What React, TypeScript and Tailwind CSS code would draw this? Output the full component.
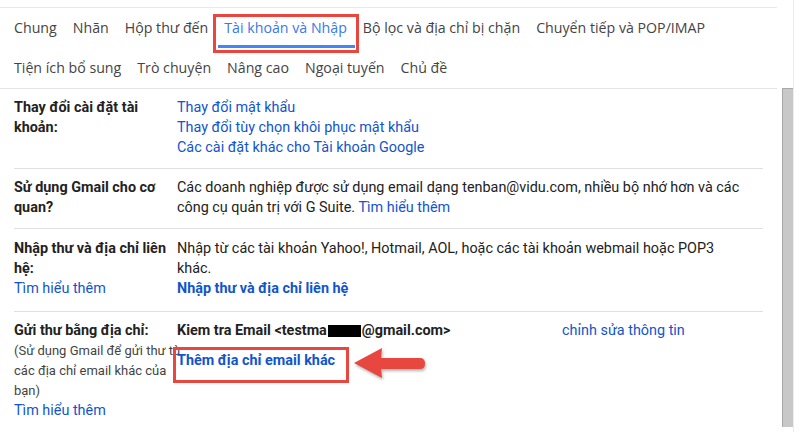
const tabsTop = [
  { label: "Chung" },
  { label: "Nhãn" },
  { label: "Hộp thư đến" },
  { label: "Tài khoản và Nhập", active: true },
  { label: "Bộ lọc và địa chỉ bị chặn" },
  { label: "Chuyển tiếp và POP/IMAP" },
];

const tabsBottom = ["Tiện ích bổ sung", "Trò chuyện", "Nâng cao", "Ngoại tuyến", "Chủ đề"];

function Tab({ label, active }: { label: string; active?: boolean }) {
  if (!active) {
    return <div className="flex h-10 items-center px-2 whitespace-nowrap text-[#444]">{label}</div>;
  }
  return (
    <div className="relative flex h-10 items-center px-2 whitespace-nowrap text-[#3b78e7]">
      {label}
      <span className="absolute left-[2px] right-0 top-[37px] h-[3px] bg-[#4285f4]" />
      <span className="absolute left-[-3px] right-[-4px] top-[6px] h-[39px] border-[3px] border-[#e8463f]" />
    </div>
  );
}

function Arrow() {
  return (
    <svg
      className="absolute left-[177px] top-[-4px] h-[34px] w-[74px]"
      viewBox="0 0 74 34"
      style={{ filter: "drop-shadow(1px 2px 1.5px rgba(0,0,0,0.3))" }}
    >
      <path
        d="M0 16 L28 1 L27 11 L66 11 Q71 11 71 16.5 Q71 22 66 22 L27 22 L28 31 Z"
        fill="#e8473f"
      />
    </svg>
  );
}

export default function App() {
  return (
    <div className="relative flex h-[432px] w-[801px] overflow-hidden bg-white font-['Roboto','Liberation_Sans',sans-serif] text-[14.4px] leading-5 text-[#222]">
      <div className="w-[777px] shrink-0">
        <div className="mt-[7px] border-t border-[#e8e8e8]" />

        <div className="border-b border-[#e5e5e5] pl-[6px] font-['Open_Sans','Roboto',sans-serif] text-[14.2px]">
          <div className="flex">
            {tabsTop.map((t) => (
              <Tab key={t.label} label={t.label} active={t.active} />
            ))}
          </div>
          <div className="flex">
            {tabsBottom.map((t) => (
              <Tab key={t} label={t} />
            ))}
          </div>
        </div>

        <div className="mx-[14px]">
          <div className="flex border-b border-[#e0e0e0] pb-[10px] pt-[9px]">
            <div className="w-[163px] shrink-0 font-bold">
              Thay đổi cài đặt tài
              <br />
              khoản:
            </div>
            <div className="flex flex-col text-[#1155cc]">
              <span>Thay đổi mật khẩu</span>
              <span>Thay đổi tùy chọn khôi phục mật khẩu</span>
              <span>Các cài đặt khác cho Tài khoản Google</span>
            </div>
          </div>

          <div className="flex border-b border-[#e0e0e0] pb-[10px] pt-[9px]">
            <div className="w-[163px] shrink-0 font-bold">
              Sử dụng Gmail cho cơ
              <br />
              quan?
            </div>
            <div className="whitespace-nowrap">
              Các doanh nghiệp được sử dụng email dạng tenban@vidu.com, nhiều bộ nhớ hơn và các
              <br />
              công cụ quản trị với G Suite. <span className="text-[#1155cc]">Tìm hiểu thêm</span>
            </div>
          </div>

          <div className="flex border-b border-[#e0e0e0] pb-[12px] pt-[10px]">
            <div className="w-[163px] shrink-0">
              <div className="font-bold">
                Nhập thư và địa chỉ liên
                <br />
                hệ:
              </div>
              <div className="text-[#1155cc]">Tìm hiểu thêm</div>
            </div>
            <div className="whitespace-nowrap">
              Nhập từ các tài khoản Yahoo!, Hotmail, AOL, hoặc các tài khoản webmail hoặc POP3
              <br />
              khác.
              <div className="font-bold text-[#1155cc]">Nhập thư và địa chỉ liên hệ</div>
            </div>
          </div>

          <div className="flex border-b border-[#e0e0e0] pb-[11px] pt-[9px]">
            <div className="w-[163px] shrink-0 whitespace-nowrap">
              <div className="font-bold">Gửi thư bằng địa chỉ:</div>
              <div className="text-[13px] text-[#444]">
                (Sử dụng Gmail để gửi thư từ
                <br />
                các địa chỉ email khác của
                <br />
                bạn)
              </div>
              <div className="text-[#1155cc]">Tìm hiểu thêm</div>
            </div>
            <div className="relative z-10 flex-1">
              <div className="flex whitespace-nowrap">
                <div className="flex w-[385px] items-center font-bold">
                  Kiem tra Email &lt;testma
                  <span className="mx-px inline-block h-[12px] w-[33px] bg-black" />
                  @gmail.com&gt;
                </div>
                <span className="text-[#1155cc]">chỉnh sửa thông tin</span>
              </div>
              <div className="relative mt-[10px]">
                <span className="font-bold text-[#1155cc]">Thêm địa chỉ email khác</span>
                <span className="absolute left-[-4px] top-[-4px] h-[36px] w-[176px] border-[3px] border-[#e8463f]" />
                <Arrow />
              </div>
            </div>
          </div>
        </div>
      </div>

      <div className="w-[17px] shrink-0 border-r border-[#ececec] pl-[5px] pt-[88px]">
        <div className="h-[339px] w-[11px] border-l border-t border-[#a8a8a8] bg-[#c8c8c8]" />
      </div>
    </div>
  );
}
